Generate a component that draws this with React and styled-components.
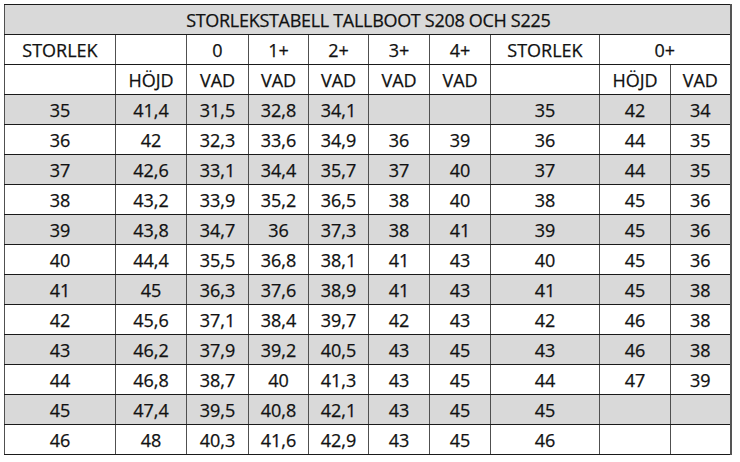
import React from "react";
import styled, { createGlobalStyle } from "styled-components";

const Global = createGlobalStyle`
  html, body { margin: 0; padding: 0; background: #fff; }
  body { width: 740px; height: 462px; overflow: hidden; }
`;

const Wrap = styled.div`
  padding: 4px 0 0 4px;
`;

const Table = styled.table`
  border-collapse: collapse;
  table-layout: fixed;
  width: 727px;
  font-family: "Open Sans", "Liberation Sans", sans-serif;
  font-size: 18px;
  color: #111;
  border-top: 1px solid #222;
  border-left: 1px solid #333;
  border-right: 2px solid #555;
  border-bottom: 1px solid #222;
`;

const Row = styled.tr`
  height: 30px;
  background: ${(p) => (p.$shade ? "#d9d9d9" : "#fff")};
`;

const Cell = styled.td`
  padding: 0;
  text-align: center;
  vertical-align: middle;
  line-height: 1;
  white-space: nowrap;
  -webkit-text-stroke: 0.25px #111;
  border-top: 1px solid #1a1a1a;
  border-bottom: 1px solid #1a1a1a;
  border-left: 1px solid #505050;
  border-right: 1px solid #505050;
`;

const Title = styled(Cell)`
  font-size: 18px;
  letter-spacing: -0.3px;
  padding-left: 2px;
`;

const widths = [111, 71, 62, 60, 60, 61, 61, 109, 71, 60];

const data = [
  ["35", "41,4", "31,5", "32,8", "34,1", "", "", "35", "42", "34"],
  ["36", "42", "32,3", "33,6", "34,9", "36", "39", "36", "44", "35"],
  ["37", "42,6", "33,1", "34,4", "35,7", "37", "40", "37", "44", "35"],
  ["38", "43,2", "33,9", "35,2", "36,5", "38", "40", "38", "45", "36"],
  ["39", "43,8", "34,7", "36", "37,3", "38", "41", "39", "45", "36"],
  ["40", "44,4", "35,5", "36,8", "38,1", "41", "43", "40", "45", "36"],
  ["41", "45", "36,3", "37,6", "38,9", "41", "43", "41", "45", "38"],
  ["42", "45,6", "37,1", "38,4", "39,7", "42", "43", "42", "46", "38"],
  ["43", "46,2", "37,9", "39,2", "40,5", "43", "45", "43", "46", "38"],
  ["44", "46,8", "38,7", "40", "41,3", "43", "45", "44", "47", "39"],
  ["45", "47,4", "39,5", "40,8", "42,1", "43", "45", "45", "", ""],
  ["46", "48", "40,3", "41,6", "42,9", "43", "45", "46", "", ""],
];

export default function App() {
  return (
    <>
      <Global />
      <Wrap>
        <Table>
          <colgroup>
            {widths.map((w, i) => (
              <col key={i} style={{ width: w }} />
            ))}
          </colgroup>
          <tbody>
            <Row $shade>
              <Title colSpan={10}>STORLEKSTABELL TALLBOOT S208 OCH S225</Title>
            </Row>
            <Row>
              <Cell>STORLEK</Cell>
              <Cell></Cell>
              <Cell>0</Cell>
              <Cell>1+</Cell>
              <Cell>2+</Cell>
              <Cell>3+</Cell>
              <Cell>4+</Cell>
              <Cell>STORLEK</Cell>
              <Cell colSpan={2}>0+</Cell>
            </Row>
            <Row>
              <Cell></Cell>
              <Cell>HÖJD</Cell>
              <Cell>VAD</Cell>
              <Cell>VAD</Cell>
              <Cell>VAD</Cell>
              <Cell>VAD</Cell>
              <Cell>VAD</Cell>
              <Cell></Cell>
              <Cell>HÖJD</Cell>
              <Cell>VAD</Cell>
            </Row>
            {data.map((r, i) => (
              <Row key={i} $shade={i % 2 === 0}>
                {r.map((v, j) => (
                  <Cell key={j}>{v}</Cell>
                ))}
              </Row>
            ))}
          </tbody>
        </Table>
      </Wrap>
    </>
  );
}
